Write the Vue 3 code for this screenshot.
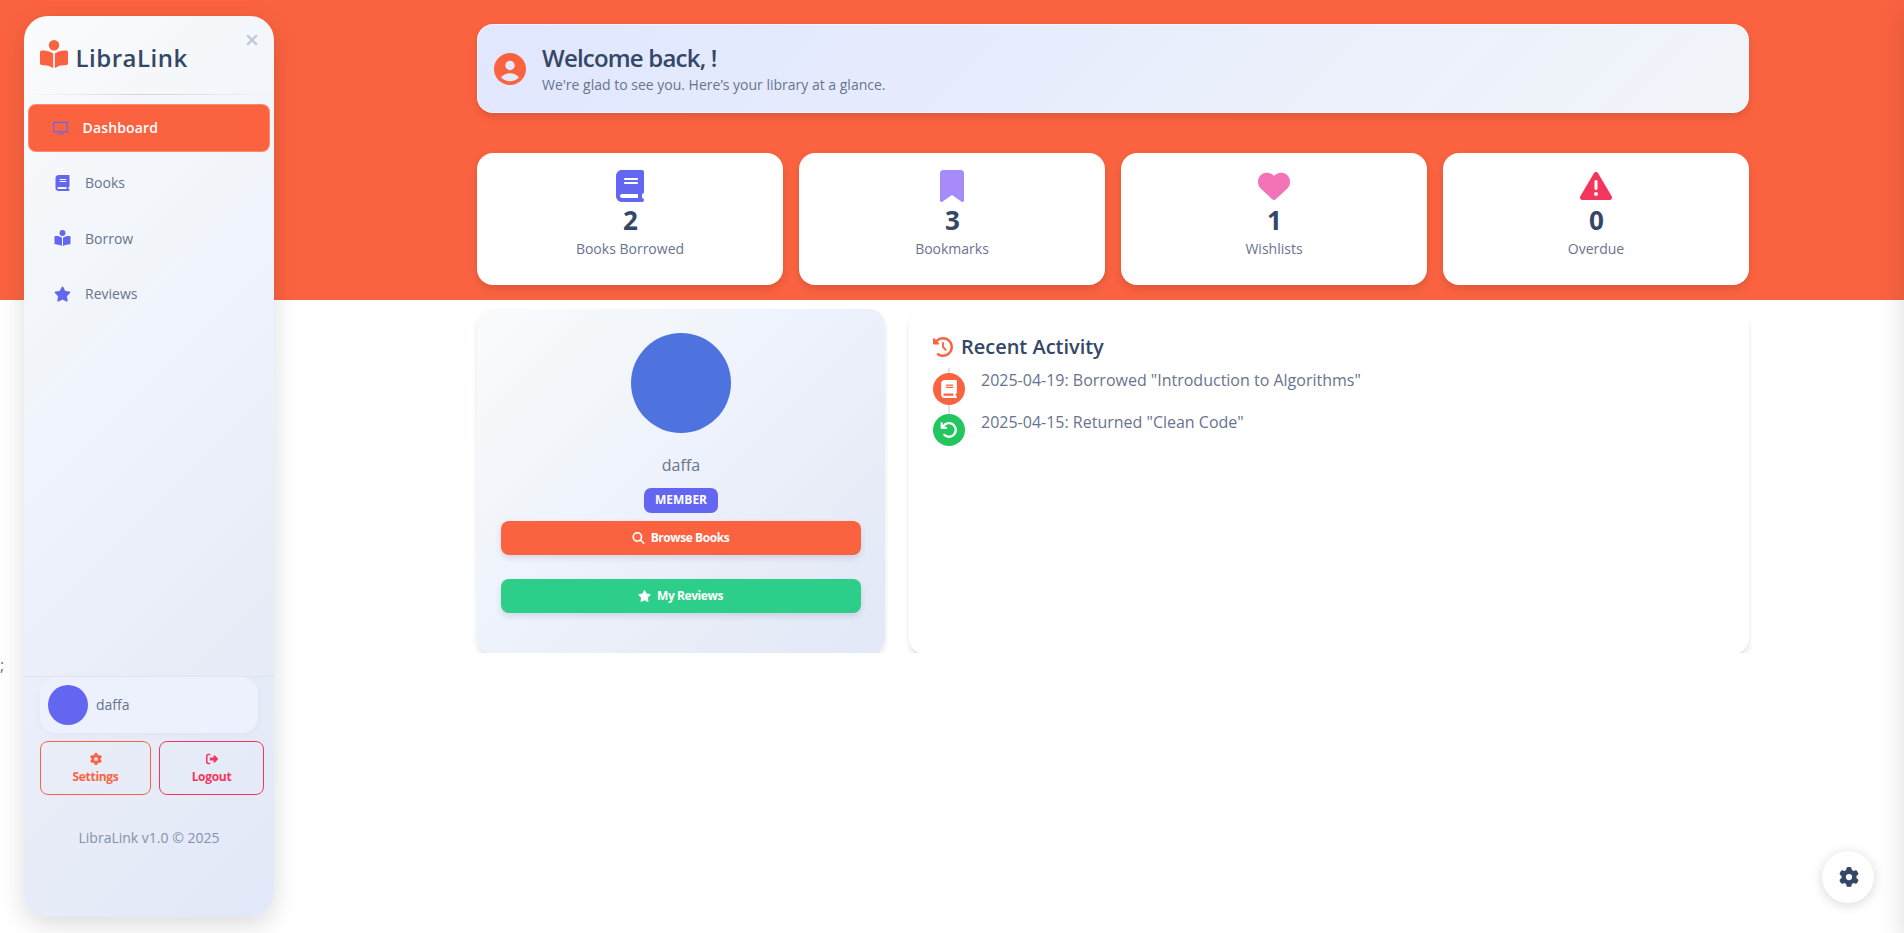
<script setup>
const icons = {
  book: [448, 'M96 0C43 0 0 43 0 96V416c0 53 43 96 96 96H384h32c17.7 0 32-14.3 32-32s-14.3-32-32-32V384c17.7 0 32-14.3 32-32V32c0-17.7-14.3-32-32-32H384 96zm0 384H352v64H96c-17.7 0-32-14.3-32-32s14.3-32 32-32zm32-240c0-8.8 7.2-16 16-16H336c8.8 0 16 7.2 16 16s-7.2 16-16 16H144c-8.8 0-16-7.2-16-16zm16 48H336c8.8 0 16 7.2 16 16s-7.2 16-16 16H144c-8.8 0-16-7.2-16-16s7.2-16 16-16z'],
  bookmark: [384, 'M0 48V487.7C0 501.1 10.9 512 24.3 512c5 0 9.9-1.5 14-4.4L192 400 345.7 507.6c4.1 2.9 9 4.4 14 4.4c13.4 0 24.3-10.9 24.3-24.3V48c0-26.5-21.5-48-48-48H48C21.5 0 0 21.5 0 48z'],
  heart: [512, 'M47.6 300.4L228.3 469.1c7.5 7 17.4 10.9 27.7 10.9s20.2-3.9 27.7-10.9L464.4 300.4c30.4-28.3 47.6-68 47.6-109.5v-5.8c0-69.9-50.5-129.5-119.4-141C347 36.5 300.6 51.4 268 84L256 96 244 84c-32.6-32.6-79-47.5-124.6-39.9C50.5 55.6 0 115.2 0 185.1v5.8c0 41.5 17.2 81.2 47.6 109.5z'],
  warning: [512, 'M256 32c14.2 0 27.3 7.5 34.5 19.8l216 368c7.3 12.4 7.3 27.7 .2 40.1S486.3 480 472 480H40c-14.3 0-27.6-7.7-34.7-20.1s-7-27.8 .2-40.1l216-368C228.7 39.5 241.8 32 256 32zm0 128c-13.3 0-24 10.7-24 24V296c0 13.3 10.7 24 24 24s24-10.7 24-24V184c0-13.3-10.7-24-24-24zm32 224a32 32 0 1 0 -64 0 32 32 0 1 0 64 0z'],
  reader: [512, 'M160 96a96 96 0 1 1 192 0A96 96 0 1 1 160 96zm80 152V512l-48.4-24.2c-20.9-10.4-43.5-17-66.8-19.3l-96-9.6C12.5 457.2 0 443.5 0 427V224c0-17.7 14.3-32 32-32H62.3c63.6 0 125.6 19.6 177.7 56zm32 264V248c52.1-36.4 114.1-56 177.7-56H480c17.7 0 32 14.3 32 32V427c0 16.4-12.5 30.2-28.8 31.8l-96 9.6c-23.2 2.3-45.9 8.9-66.8 19.3L272 512z'],
  star: [576, 'M316.9 18C311.6 7 300.4 0 288.1 0s-23.4 7-28.8 18L195 150.3 51.4 171.5c-12 1.8-22 10.2-25.7 21.7s-.7 24.2 7.9 32.7L137.8 329 113.2 474.7c-2 12 3 24.2 12.9 31.3s23 8 33.8 2.3l128.3-68.5 128.3 68.5c10.8 5.7 23.9 4.9 33.8-2.3s14.9-19.3 12.9-31.3L438.5 329 542.7 225.9c8.6-8.5 11.7-21.2 7.9-32.7s-13.7-19.9-25.7-21.7L381.2 150.3 316.9 18z'],
  close: [384, 'M342.6 150.6c12.5-12.5 12.5-32.8 0-45.3s-32.8-12.5-45.3 0L192 210.7 86.6 105.4c-12.5-12.5-32.8-12.5-45.3 0s-12.5 32.8 0 45.3L146.7 256 41.4 361.4c-12.5 12.5-12.5 32.8 0 45.3s32.8 12.5 45.3 0L192 301.3 297.4 406.6c12.5 12.5 32.8 12.5 45.3 0s12.5-32.8 0-45.3L237.3 256 342.6 150.6z'],
  gear: [512, 'M495.9 166.6c3.2 8.7 .5 18.4-6.4 24.6l-43.3 39.4c1.1 8.3 1.7 16.8 1.7 25.4s-.6 17.1-1.7 25.4l43.3 39.4c6.9 6.2 9.6 15.9 6.4 24.6c-4.4 11.9-9.7 23.3-15.8 34.3l-4.7 8.1c-6.6 11-14 21.4-22.1 31.2c-5.9 7.2-15.7 9.6-24.5 6.8l-55.7-17.7c-13.4 10.3-28.2 18.9-44 25.4l-12.5 57.1c-2 9.1-9 16.3-18.2 17.8c-13.8 2.3-28 3.5-42.5 3.5s-28.7-1.2-42.5-3.5c-9.2-1.5-16.2-8.7-18.2-17.8l-12.5-57.1c-15.8-6.5-30.6-15.1-44-25.4L83.1 425.9c-8.8 2.8-18.6 .3-24.5-6.8c-8.1-9.8-15.5-20.2-22.1-31.2l-4.7-8.1c-6.1-11-11.4-22.4-15.8-34.3c-3.2-8.7-.5-18.4 6.4-24.6l43.3-39.4C64.6 273.1 64 264.6 64 256s.6-17.1 1.7-25.4L22.4 191.2c-6.9-6.2-9.6-15.9-6.4-24.6c4.4-11.9 9.7-23.3 15.8-34.3l4.7-8.1c6.6-11 14-21.4 22.1-31.2c5.9-7.2 15.7-9.6 24.5-6.8l55.7 17.7c13.4-10.3 28.2-18.9 44-25.4l12.5-57.1c2-9.1 9-16.3 18.2-17.8C227.3 1.2 241.5 0 256 0s28.7 1.2 42.5 3.5c9.2 1.5 16.2 8.7 18.2 17.8l12.5 57.1c15.8 6.5 30.6 15.1 44 25.4l55.7-17.7c8.8-2.8 18.6-.3 24.5 6.8c8.1 9.8 15.5 20.2 22.1 31.2l4.7 8.1c6.1 11 11.4 22.4 15.8 34.3zM256 336a80 80 0 1 0 0-160 80 80 0 1 0 0 160z'],
  logout: [512, 'M377.9 105.9L500.7 228.7c7.2 7.2 11.3 17.1 11.3 27.3s-4.1 20.1-11.3 27.3L377.9 406.1c-6.4 6.4-15 9.9-24 9.9c-18.7 0-33.9-15.2-33.9-33.9l0-62.1-128 0c-17.7 0-32-14.3-32-32l0-64c0-17.7 14.3-32 32-32l128 0 0-62.1c0-18.7 15.2-33.9 33.9-33.9c9 0 17.6 3.6 24 9.9zM160 96L96 96c-17.7 0-32 14.3-32 32l0 256c0 17.7 14.3 32 32 32l64 0c17.7 0 32 14.3 32 32s-14.3 32-32 32l-64 0c-53 0-96-43-96-96L0 128C0 75 43 32 96 32l64 0c17.7 0 32 14.3 32 32s-14.3 32-32 32z'],
  search: [512, 'M416 208c0 45.9-14.9 88.3-40 122.7L502.6 457.4c12.5 12.5 12.5 32.8 0 45.3s-32.8 12.5-45.3 0L330.7 376c-34.4 25.2-76.8 40-122.7 40C93.1 416 0 322.9 0 208S93.1 0 208 0S416 93.1 416 208zM208 352a144 144 0 1 0 0-288 144 144 0 1 0 0 288z'],
  history: [512, 'M75 75L41 41C25.9 25.9 0 36.6 0 57.9V168c0 13.3 10.7 24 24 24H134.1c21.4 0 32.1-25.9 17-41l-30.8-30.8C155 85.5 203 64 256 64c106 0 192 86 192 192s-86 192-192 192c-40.8 0-78.6-12.7-109.7-34.4c-14.5-10.1-34.4-6.6-44.6 7.9s-6.6 34.4 7.9 44.6C151.2 495 201.7 512 256 512c141.4 0 256-114.6 256-256S397.4 0 256 0C185.3 0 121.3 28.7 75 75zm181 53c-13.3 0-24 10.7-24 24V256c0 6.4 2.5 12.5 7 17l72 72c9.4 9.4 24.6 9.4 33.9 0s9.4-24.6 0-33.9l-65-65V152c0-13.3-10.7-24-24-24z'],
  undo: [512, 'M125.7 160H176c17.7 0 32 14.3 32 32s-14.3 32-32 32H48c-17.7 0-32-14.3-32-32V64c0-17.7 14.3-32 32-32s32 14.3 32 32v51.2L97.6 97.6c87.5-87.5 229.3-87.5 316.8 0s87.5 229.3 0 316.8s-229.3 87.5-316.8 0c-12.5-12.5-12.5-32.8 0-45.3s32.8-12.5 45.3 0c62.5 62.5 163.8 62.5 226.3 0s62.5-163.8 0-226.3s-163.8-62.5-226.3 0L125.7 160z'],
  screen: [512, 'M8 24H504V392H8V24zM50 64V352H462V64H50zM144 426H368V464H144z'],
}

const FaIcon = (props) => {
  const [w, d] = icons[props.name]
  return h('svg', { viewBox: `0 0 ${w} 512`, fill: 'currentColor', 'fill-rule': props.name === 'screen' ? 'evenodd' : 'nonzero', 'aria-hidden': 'true' }, [h('path', { d })])
}
FaIcon.props = ['name']

const nav = [
  { label: 'Books', icon: 'book' },
  { label: 'Borrow', icon: 'reader' },
  { label: 'Reviews', icon: 'star' },
]
const stats = [
  { value: 2, label: 'Books Borrowed', icon: 'book', tone: 'indigo' },
  { value: 3, label: 'Bookmarks', icon: 'bookmark', tone: 'violet' },
  { value: 1, label: 'Wishlists', icon: 'heart', tone: 'pink' },
  { value: 0, label: 'Overdue', icon: 'warning', tone: 'red' },
]
const activity = [
  { text: '2025-04-19: Borrowed "Introduction to Algorithms"', icon: 'book', tone: 'orange' },
  { text: '2025-04-15: Returned "Clean Code"', icon: 'undo', tone: 'green' },
]
</script>

<script>
import { h } from 'vue'
</script>

<template>
  <div class="page">
    <div class="band"></div>
    <span class="stray">;</span>

    <aside class="sidebar">
      <FaIcon name="close" class="close" />
      <div class="brand"><FaIcon name="reader" class="brand-icon" /><span>LibraLink</span></div>
      <div class="rule"></div>
      <nav>
        <a class="link active"><FaIcon name="screen" class="link-icon" /><span>Dashboard</span></a>
        <a v-for="n in nav" :key="n.label" class="link"><FaIcon :name="n.icon" class="link-icon" /><span>{{ n.label }}</span></a>
      </nav>
      <div class="side-foot">
        <div class="user"><i class="user-dot"></i><span>daffa</span></div>
        <div class="side-actions">
          <button class="outline settings"><FaIcon name="gear" class="tiny" /><span>Settings</span></button>
          <button class="outline logout"><FaIcon name="logout" class="tiny" /><span>Logout</span></button>
        </div>
        <p class="version">LibraLink v1.0 © 2025</p>
      </div>
    </aside>

    <main class="main">
      <section class="welcome">
        <svg class="account" viewBox="0 0 32 32"><circle cx="16" cy="16" r="16" fill="#fb6340" /><circle cx="16" cy="12.5" r="4.7" fill="#e3e8fd" /><path d="M7 24.2C9.500 21.300 12.500 20.200 16 20.200s6.500 1.100 9 4C22.700 26.800 19.500 28.300 16 28.300S9.300 26.800 7 24.200z" fill="#e3e8fd" /></svg>
        <div class="greeting">
          <h1>Welcome back, !</h1>
          <p>We're glad to see you. Here’s your library at a glance.</p>
        </div>
      </section>

      <section class="stats">
        <article v-for="s in stats" :key="s.label" class="stat">
          <FaIcon :name="s.icon" class="stat-icon" :class="s.tone" />
          <strong>{{ s.value }}</strong>
          <span>{{ s.label }}</span>
        </article>
      </section>

      <section class="panels">
        <article class="profile">
          <i class="avatar"></i>
          <span class="name">daffa</span>
          <span class="badge">MEMBER</span>
          <button class="solid browse"><FaIcon name="search" class="btn-icon heavy" /><span>Browse Books</span></button>
          <button class="solid reviews"><FaIcon name="star" class="btn-icon" /><span>My Reviews</span></button>
        </article>
        <article class="activity">
          <h2><FaIcon name="history" class="h-icon" /><span>Recent Activity</span></h2>
          <ul>
            <li v-for="a in activity" :key="a.text">
              <i class="marker" :class="a.tone"><FaIcon :name="a.icon" class="marker-icon" /></i>
              <span>{{ a.text }}</span>
            </li>
          </ul>
        </article>
      </section>
    </main>

    <div class="edge"></div>
    <button class="fab"><FaIcon name="gear" class="fab-icon" /></button>
  </div>
</template>

<style>
html, body { margin: 0; overflow: hidden; background: #fff; }
</style>

<style scoped>
* { box-sizing: border-box; }
.page {
  position: relative;
  height: 933px;
  overflow: hidden;
  display: flex;
  font-family: "Open Sans", sans-serif;
  color: #67748e;
}
h1, h2, p, ul { margin: 0; padding: 0; }
svg { display: block; flex: none; }
button { font-family: inherit; cursor: pointer; }
.band { position: absolute; inset: 0 0 auto 0; height: 300px; background: #fb6340; }
.stray { position: absolute; left: 0; top: 653px; font-size: 16px; line-height: 24px; }

.sidebar {
  position: relative;
  flex: none;
  width: 250px;
  height: 901px;
  margin: 16px 0 0 24px;
  border-radius: 24px;
  background: linear-gradient(135deg, #fafbfd 0%, #f1f5f9 32%, #f0f4fd 37%, #e9edf8 68%, #e1e8f7 100%);
  box-shadow: 0 8px 26px rgba(0, 0, 0, 0.14);
  display: flex;
  flex-direction: column;
}
.close { position: absolute; top: 16px; right: 14px; width: 16px; height: 16px; color: #c1c8d5; stroke: currentColor; stroke-width: 14; }
.brand { display: flex; padding: 24px 16px 0; height: 78px; }
.brand-icon { width: 28px; height: 28px; color: #fb6340; }
.brand span { margin-left: 7.500px; font-size: 24px; line-height: 36px; font-weight: 600; letter-spacing: 0.52px; color: #344767; }
.rule { height: 1px; background: linear-gradient(90deg, transparent, rgba(0, 0, 0, 0.14), transparent); }
nav { padding: 9px 4px 0; }
.link { display: flex; align-items: center; height: 47px; margin: 0 0 8.500px; padding-left: 26px; font-size: 14px; line-height: 21px; }
.link-icon { width: 17px; height: 16px; margin-top: -2px; color: #6366f1; }
.link span { margin-left: 14px; margin-top: -2px; }
.link.active { height: 48px; margin-bottom: 8px; padding-left: 22.500px; border: 1px solid rgba(255, 255, 255, 0.24); border-radius: 8px; background: #fb6340; color: #fff; font-weight: 600; letter-spacing: 0.15px; }
.link.active .link-icon { height: 15px; margin-top: 0; }
.side-foot { margin-top: auto; height: 241px; border-top: 1px solid #e3e4ea; }
.user { display: flex; align-items: center; gap: 8px; height: 56px; margin: 0 16px; width: 218px; padding-left: 8px; border-radius: 16px; background: #edf1fe; box-shadow: 0 2px 6px rgba(99, 102, 241, 0.06); font-size: 14px; }
.user span { margin-top: -1px; }
.user-dot { width: 40px; height: 40px; border-radius: 50%; background: #6366f1; }
.side-actions { display: flex; gap: 8px; margin: 8px 0 0 16px; }
.outline { height: 54px; padding: 0; border: 1px solid; border-radius: 8px; background: transparent; display: flex; flex-direction: column; align-items: center; justify-content: center; font-size: 12px; line-height: 18px; font-weight: 700; letter-spacing: -0.3px; }
.tiny { height: 12px; width: 12px; margin: 2px 0 3px; }
.settings { width: 111px; color: #fb6340; }
.logout { width: 105px; color: #f5365c; }
.version { margin-top: 32px; text-align: center; font-size: 14px; line-height: 21px; color: #8392ab; }

.main { position: relative; width: 1272px; margin-left: 203px; padding-top: 24px; }
.welcome { display: flex; align-items: center; gap: 16px; height: 89px; padding: 0 16px; border: 1px solid rgba(255, 255, 255, 0.6); border-radius: 16px; background: linear-gradient(135deg, #e0e7ff, #f1f5f9); box-shadow: 0 4px 8px rgba(0, 0, 0, 0.12); }
.account { width: 32px; height: 32px; }
.greeting { margin-top: -1px; }
.welcome h1 { font-size: 24px; line-height: 33px; font-weight: 600; letter-spacing: -0.8px; color: #344767; }
.welcome p { margin-top: 1px; font-size: 14px; line-height: 20px; }
.stats { display: grid; grid-template-columns: repeat(4, 1fr); gap: 16px; margin-top: 40px; }
.stat { display: flex; flex-direction: column; align-items: center; height: 132px; padding-top: 17px; border-radius: 16px; background: #fff; box-shadow: 0 4px 8px rgba(0, 0, 0, 0.12); }
.stat-icon { width: 32px; height: 32px; }
.stat strong { padding-left: 1px; font-size: 26px; line-height: 36px; color: #344767; }
.stat span { font-size: 14px; line-height: 21px; }
.indigo { color: #6366f1; }
.violet { color: #a78bfa; }
.pink { color: #f472b6; }
.red { color: #f5365c; }
.panels { display: grid; grid-template-columns: 408px 840px; gap: 24px; height: 368px; margin: 0 -24px; padding: 24px 24px 0; overflow: hidden; }
.profile, .activity { height: 345px; border-radius: 16px; box-shadow: 0 4px 6px -1px rgba(0, 0, 0, 0.14); }
.profile { display: flex; flex-direction: column; align-items: center; padding: 24px; background: linear-gradient(135deg, #fafbfd 0%, #f1f5f9 32%, #f0f4fd 37%, #e9edf8 70%, #e1e8f7 100%); }
.avatar { flex: none; width: 100px; height: 100px; border-radius: 50%; background: #4e73df; }
.name { margin-top: 20px; font-size: 16px; line-height: 24px; }
.badge { margin-top: 11px; flex: none; width: 74px; height: 25px; border-radius: 7px; background: #6366f1; color: #fff; font-size: 12px; line-height: 24px; font-weight: 700; text-align: center; }
.solid { flex: none; display: flex; align-items: center; justify-content: center; gap: 6px; width: 360px; height: 34px; padding: 0 1px 1px 0; border: 0; border-radius: 8px; color: #fff; font-size: 12px; font-weight: 700; letter-spacing: -0.42px; box-shadow: 0 3px 6px rgba(50, 50, 93, 0.14); }
.browse { margin-top: 8px; background: #fb6340; }
.reviews { margin-top: 24px; background: #2dce89; }
.btn-icon { width: 13px; height: 12px; }
.heavy { stroke: currentColor; stroke-width: 8; overflow: visible; }
.activity { padding: 24px; background: #fff; }
.activity h2 { display: flex; align-items: center; gap: 8px; height: 27px; font-size: 20px; font-weight: 600; letter-spacing: -0.02px; color: #344767; }
.h-icon { width: 20px; height: 20px; color: #fb6340; }
ul { position: relative; list-style: none; margin-top: 8px; }
ul::before { content: ""; position: absolute; left: 15px; top: 0; width: 2px; height: 60px; background: #dee2e6; }
li { position: relative; display: flex; gap: 16px; height: 41.500px; font-size: 16px; line-height: 24px; }
.marker { display: flex; align-items: center; justify-content: center; width: 32px; height: 32px; margin-top: 4.500px; border-radius: 50%; color: #fff; }
.orange { background: #fb6340; }
.green { background: #22c55e; }
.marker-icon { width: 18px; height: 18px; }
.edge { position: absolute; top: 0; right: -360px; width: 360px; height: 933px; box-shadow: 0 10px 26px rgba(0, 0, 0, 0.14); }
.fab { position: absolute; right: 30px; bottom: 30px; width: 52px; height: 52px; padding: 0; border: 0; border-radius: 50%; background: #fff; box-shadow: 0 2px 12px rgba(0, 0, 0, 0.16); display: flex; align-items: center; justify-content: center; }
.fab-icon { width: 20px; height: 20px; margin: -1px 0 0 1px; color: #344767; }
</style>
